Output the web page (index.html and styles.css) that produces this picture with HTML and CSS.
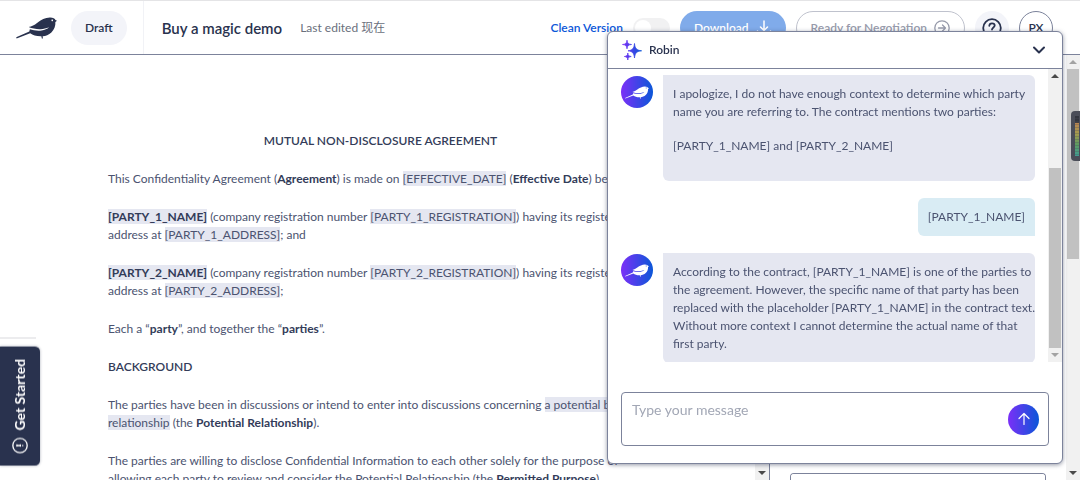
FILE: index.html
```
<!DOCTYPE html>
<html lang="en">
<head>
    <meta charset="UTF-8">
    <meta name="viewport" content="width=device-width, initial-scale=1.0">
    <title>Buy a magic demo - Robin</title>
    <link rel="stylesheet" href="styles.css">
</head>
<body>
    <svg class="defs" aria-hidden="true">
        <defs>
            <linearGradient id="spark" x1="0" y1="0" x2="1" y2="0">
                <stop offset="0" stop-color="#7b2ff7"/>
                <stop offset="1" stop-color="#0b57d8"/>
            </linearGradient>
            <symbol id="bird" viewBox="0 0 40 21">
                <path fill="currentColor" fill-rule="evenodd" d="M0.200 19.600L13 14L13.500 11.700C17 12.900 21 13.400 25 12.900C28 12.500 30.500 11.400 32.300 9.800C29.500 10.900 27 11.600 24 11.700C20 11.900 16 11 12.300 9.600C15.500 8.800 18 7.600 20.500 5.600C24.500 2.200 28.500 0.600 33 0.300C36 0.200 38 1.500 38.500 2.600L40 3.500L38.400 4.600C38.700 8 37.500 12 34.500 14.800C32 17.200 29 18.300 26 18.500L26.300 20.800L25.200 20.700L24.700 18.600C20 18.700 16.500 17.800 13.800 15.700L0.600 20.700ZM35.300 2.200a.8 .8 0 1 0 .1 0Z"/>
            </symbol>
        </defs>
    </svg>

    <header class="topbar">
        <div class="brand">
            <svg class="logo"><use href="#bird"/></svg>
            <span class="status">Draft</span>
        </div>
        <h1 class="doc-title">Buy a magic demo</h1>
        <span class="edited">Last edited 现在</span>
        <div class="actions">
            <label class="clean-label" for="clean">Clean Version</label>
            <input class="toggle" type="checkbox" id="clean">
            <button class="btn btn-download" type="button">
                Download
                <svg width="16" height="16" viewBox="0 0 16 16" fill="none" stroke="currentColor" stroke-width="1.500" stroke-linecap="round" stroke-linejoin="round">
                    <path d="M8 1v9M4.500 7L8 10.500L11.500 7M1.500 11v3.500h13V11"/>
                </svg>
            </button>
            <button class="btn btn-ready" type="button">
                Ready for Negotiation
                <svg width="16" height="16" viewBox="0 0 16 16" fill="none" stroke="currentColor" stroke-width="1.300" stroke-linecap="round" stroke-linejoin="round">
                    <circle cx="8" cy="8" r="7.200"/>
                    <path d="M4.500 8h7M8.500 5l3 3l-3 3"/>
                </svg>
            </button>
            <button class="round help" type="button" aria-label="Help">
                <svg width="20" height="20" viewBox="0 0 20 20" fill="none" stroke="currentColor" stroke-width="1.800" stroke-linecap="round">
                    <circle cx="10" cy="10" r="8.800"/>
                    <path d="M7.300 7.800C7.400 6.200 8.500 5.300 10 5.300C11.600 5.300 12.700 6.300 12.700 7.600C12.700 9.400 10 9.600 10 11.600M10 14.400v.1"/>
                </svg>
            </button>
            <button class="round avatar" type="button">PX</button>
        </div>
    </header>

    <div class="workspace">
        <main class="document">
            <h2 class="center">MUTUAL NON-DISCLOSURE AGREEMENT</h2>
            <p>This Confidentiality Agreement (<strong>Agreement</strong>) is made on <mark>[EFFECTIVE_DATE]</mark> (<strong>Effective Date</strong>) between</p>
            <p><mark><strong>[PARTY_1_NAME]</strong></mark> (company registration number <mark>[PARTY_1_REGISTRATION]</mark>) having its registered address at <mark>[PARTY_1_ADDRESS]</mark>; and</p>
            <p><mark><strong>[PARTY_2_NAME]</strong></mark> (company registration number <mark>[PARTY_2_REGISTRATION]</mark>) having its registered address at <mark>[PARTY_2_ADDRESS]</mark>;</p>
            <p>Each a “<strong>party</strong>”, and together the “<strong>parties</strong>”.</p>
            <h2>BACKGROUND</h2>
            <p>The parties have been in discussions or intend to enter into discussions concerning <mark>a potential business relationship</mark> (the <strong>Potential Relationship</strong>).</p>
            <p>The parties are willing to disclose Confidential Information to each other solely for the purpose of allowing each party to review and consider the Potential Relationship (the <strong>Permitted Purpose</strong>).</p>
        </main>
        <div class="scrollbar">
            <span class="arrow up"></span>
            <span class="arrow down dark"></span>
        </div>
        <aside class="side">
            <textarea aria-label="Response"></textarea>
        </aside>
        <div class="scrollbar">
            <span class="arrow up"></span>
            <div class="thumb page-thumb"></div>
            <span class="arrow down dark"></span>
        </div>
    </div>

    <div class="previous-tab"></div>
    <button class="get-started" type="button">
        <svg width="16" height="16" viewBox="0 0 16 16" fill="none" stroke="currentColor" stroke-width="1.300" stroke-linecap="round">
            <circle cx="8" cy="8" r="7.200"/>
            <path d="M5.200 8h.1M7.600 8h3.500M7.600 7.300v1.400M11.100 7.300v1.400"/>
        </svg>
        Get Started
    </button>

    <div class="meter"><div class="meter-bar"></div></div>

    <section class="chat" aria-label="Robin">
        <div class="chat-head">
            <svg width="20" height="20" viewBox="0 0 20 20" fill="url(#spark)">
                <path d="M12.500 3.500C13 8.500 14.500 10.200 19.600 10.800C14.500 11.400 13 13 12.500 18C12 13 10.500 11.400 6 10.800C10.500 10.200 12 8.500 12.500 3.500ZM5 .2C5.300 3.200 6.300 4.200 9.500 4.500C6.300 4.800 5.300 5.800 5 8.800C4.700 5.800 3.700 4.800 .5 4.500C3.700 4.200 4.700 3.200 5 .2ZM5.800 13C6 15.400 6.800 16.200 9.200 16.500C6.800 16.800 6 17.600 5.800 20C5.600 17.600 4.800 16.800 2.400 16.500C4.800 16.200 5.600 15.400 5.800 13Z" stroke="url(#spark)" stroke-width=".8"/>
            </svg>
            <h2>Robin</h2>
            <button class="collapse" type="button" aria-label="Collapse">
                <svg width="14" height="10" viewBox="0 0 14 10" fill="none" stroke="currentColor" stroke-width="2" stroke-linecap="round" stroke-linejoin="round">
                    <path d="M2 2.500l5 5l5-5"/>
                </svg>
            </button>
        </div>
        <div class="chat-body">
            <div class="messages">
                <div class="message">
                    <span class="bot"><svg><use href="#bird"/></svg></span>
                    <div class="bubble">
                        <p>I apologize, I do not have enough context to determine which party name you are referring to. The contract mentions two parties:</p>
                        <p>[PARTY_1_NAME] and [PARTY_2_NAME]</p>
                    </div>
                </div>
                <div class="message mine">
                    <div class="bubble">[PARTY_1_NAME]</div>
                </div>
                <div class="message">
                    <span class="bot"><svg><use href="#bird"/></svg></span>
                    <div class="bubble">According to the contract, [PARTY_1_NAME] is one of the parties to the agreement. However, the specific name of that party has been replaced with the placeholder [PARTY_1_NAME] in the contract text. Without more context I cannot determine the actual name of that first party.</div>
                </div>
            </div>
            <div class="scrollbar">
                <span class="arrow up dark"></span>
                <div class="thumb chat-thumb"></div>
                <span class="arrow down"></span>
            </div>
        </div>
        <form class="composer">
            <textarea placeholder="Type your message" aria-label="Type your message"></textarea>
            <button class="send" type="button" aria-label="Send">
                <svg width="14" height="14" viewBox="0 0 14 14" fill="none" stroke="currentColor" stroke-width="1.200" stroke-linecap="round" stroke-linejoin="round">
                    <path d="M7 12.500V1.800M2 6.500L7 1.500L12 6.500"/>
                </svg>
            </button>
        </form>
    </section>
</body>
</html>
```
FILE: styles.css
```
* {
    margin: 0;
    padding: 0;
    box-sizing: border-box;
}

body {
    font-family: Lato, "Noto Sans CJK SC", sans-serif;
    font-size: 12px;
    line-height: 18px;
    color: #4b5370;
    background: #fff;
    height: 100vh;
    overflow: hidden;
    display: flex;
    flex-direction: column;
}

button,
textarea {
    font: inherit;
    color: inherit;
}

button {
    border: none;
    cursor: pointer;
}

.defs {
    position: absolute;
    width: 0;
    height: 0;
}

/* Top bar */
.topbar {
    display: flex;
    align-items: center;
    flex: none;
    height: 55px;
    padding-right: 27px;
    border-top: 1px solid #e4e4e6;
    border-bottom: 1px solid #7c839b;
}

.brand {
    display: flex;
    align-items: center;
    align-self: stretch;
    gap: 14px;
    padding: 0 16px;
    border-right: 1px solid #f1f2f6;
}

.logo {
    width: 41px;
    height: 22px;
    color: #29324e;
}

.status {
    padding: 8px 14px;
    border-radius: 17px;
    background: #f3f4f9;
    color: #29324e;
    font-weight: 600;
}

.doc-title {
    margin-left: 18px;
    font-size: 15px;
    font-weight: 600;
    color: #29324e;
}

.edited {
    margin-left: 18px;
    color: #6a6f7c;
}

.actions {
    display: flex;
    align-items: center;
    gap: 10px;
    margin-left: auto;
    color: #29324e;
}

.clean-label {
    font-weight: 600;
    color: #0b57d8;
}

.toggle {
    appearance: none;
    width: 37px;
    height: 20px;
    padding: 2px;
    border-radius: 10px;
    background: #f1f1f2;
}

.toggle::before {
    content: '';
    display: block;
    width: 16px;
    height: 16px;
    border-radius: 50%;
    background: #fff;
}

.btn {
    display: flex;
    align-items: center;
    gap: 7px;
    height: 34px;
    padding: 0 14px;
    border-radius: 17px;
    font-weight: 600;
}

.btn-download {
    background: #80abea;
    color: #fff;
}

.btn-ready {
    background: #fff;
    border: 1px solid #bfc2cd;
    color: #979bab;
}

.round {
    display: flex;
    align-items: center;
    justify-content: center;
    width: 34px;
    height: 34px;
    border-radius: 50%;
}

.help {
    background: #f3f4f9;
}

.avatar {
    background: #fff;
    border: 1px solid #7c839b;
    font-weight: 600;
}

/* Document and side panel */
.workspace {
    display: flex;
    flex: 1;
    min-height: 0;
}

.document {
    flex: 1;
    min-width: 0;
    overflow: hidden;
    display: flex;
    flex-direction: column;
    gap: 20px;
    padding: 77px 102px 0 108px;
}

.document > * {
    flex: none;
}

.document h2 {
    font-size: 12px;
    line-height: 18px;
    font-weight: 600;
    color: #333c59;
}

.document .center {
    text-align: center;
}

.document strong {
    color: #333c59;
}

mark {
    background: #e5e7f1;
    color: inherit;
}

.side {
    display: flex;
    flex-direction: column;
    justify-content: flex-end;
    width: 297px;
    padding: 0 20px;
    border-left: 1px solid #7c839b;
}

.side textarea {
    height: 7px;
    border: 1px solid #7c839b;
    border-bottom: none;
    border-radius: 4px 4px 0 0;
    resize: none;
}

/* Scrollbars */
.scrollbar {
    display: flex;
    flex-direction: column;
    align-items: center;
    flex: none;
    width: 14px;
    padding: 5px 0;
    background: #f1f1f1;
}

.arrow {
    border: 4px solid transparent;
    color: #a3a3a3;
}

.arrow.dark {
    color: #4a4a4a;
}

.up {
    border-top: none;
    border-bottom-color: currentColor;
}

.down {
    border-bottom: none;
    border-top-color: currentColor;
    margin-top: auto;
}

.thumb {
    width: 12px;
    background: #c1c1c1;
}

.page-thumb {
    flex: 0 0 190px;
    margin-top: 5px;
}

.chat-thumb {
    flex: 0 0 180px;
    margin-top: auto;
}

.chat-thumb + .down {
    margin-top: 5px;
}

/* Tabs fixed to the window edges */
.previous-tab {
    position: fixed;
    left: 0;
    bottom: 141px;
    width: 36px;
    height: 2px;
    background: #ececee;
}

.get-started {
    position: fixed;
    left: 0;
    bottom: 14px;
    display: flex;
    align-items: center;
    gap: 7px;
    width: 40px;
    padding: 12px 0 12px;
    writing-mode: vertical-rl;
    transform: rotate(180deg);
    border-radius: 5px 0 0 5px;
    background: #29324e;
    color: #fff;
    font-size: 14px;
    font-weight: 700;
    box-shadow: 0 0 3px rgba(41, 50, 78, 0.4);
}

.meter {
    position: fixed;
    top: 111px;
    right: 0;
    width: 9px;
    height: 50px;
    padding: 5px 1px 5px 4px;
    border-radius: 4px 0 0 4px;
    background: #4a4d58;
}

.meter-bar {
    height: 100%;
    background: repeating-linear-gradient(transparent 0 2px, rgba(74, 77, 88, 0.3) 2px 3px),
        linear-gradient(#33363f 0 16%, #b98450 18%, #a39b4e 45%, #5f9b5f 70%, #3f9d93);
}

/* Chat window */
.chat {
    position: fixed;
    top: 31px;
    right: 17px;
    width: 456px;
    border: 1px solid #7c839b;
    border-radius: 6px;
    background: #fff;
    box-shadow: 0 1px 4px rgba(41, 50, 78, 0.5);
}

.chat-head {
    display: flex;
    align-items: center;
    gap: 7px;
    height: 37px;
    padding: 0 16px 0 14px;
    border-bottom: 1px solid #7c839b;
    color: #29324e;
}

.chat-head h2 {
    font-size: 12px;
    font-weight: 600;
}

.collapse {
    margin-left: auto;
    background: none;
    line-height: 0;
}

.chat-body {
    display: flex;
    height: 293px;
}

.messages {
    flex: 1;
    display: flex;
    flex-direction: column;
    gap: 17px;
    padding: 6px 13px 0;
    overflow: hidden;
}

.message {
    display: flex;
    align-items: flex-start;
    gap: 10px;
}

.mine {
    justify-content: flex-end;
}

.bot {
    display: flex;
    align-items: center;
    justify-content: center;
    flex: none;
    width: 32px;
    height: 32px;
    margin-top: 1px;
    border-radius: 50%;
    background: linear-gradient(90deg, #7b2ff7, #0b57d8);
    color: #fff;
}

.bot svg {
    width: 24px;
    height: 13px;
}

.bubble {
    flex: 1;
    padding: 10px 0 10px 10px;
    border-radius: 0 6px 6px 6px;
    background: #e5e7f1;
}

.bubble p {
    margin-bottom: 16px;
}

.mine .bubble {
    flex: none;
    padding: 10px;
    border-radius: 6px 6px 0 6px;
    background: #d9ecf4;
}

.composer {
    display: flex;
    align-items: center;
    margin: 30px 13px 17px;
    padding-right: 9px;
    border: 1px solid #7c839b;
    border-radius: 4px;
}

.composer textarea {
    flex: 1;
    height: 52px;
    padding: 8px 10px;
    border: none;
    outline: none;
    background: none;
    resize: none;
    font-size: 14px;
}

.composer textarea::placeholder {
    color: #a2a7b5;
}

.send {
    display: flex;
    align-items: center;
    justify-content: center;
    width: 31px;
    height: 31px;
    border-radius: 50%;
    background: linear-gradient(90deg, #7b2ff7, #0b57d8);
    color: #fff;
}
```
